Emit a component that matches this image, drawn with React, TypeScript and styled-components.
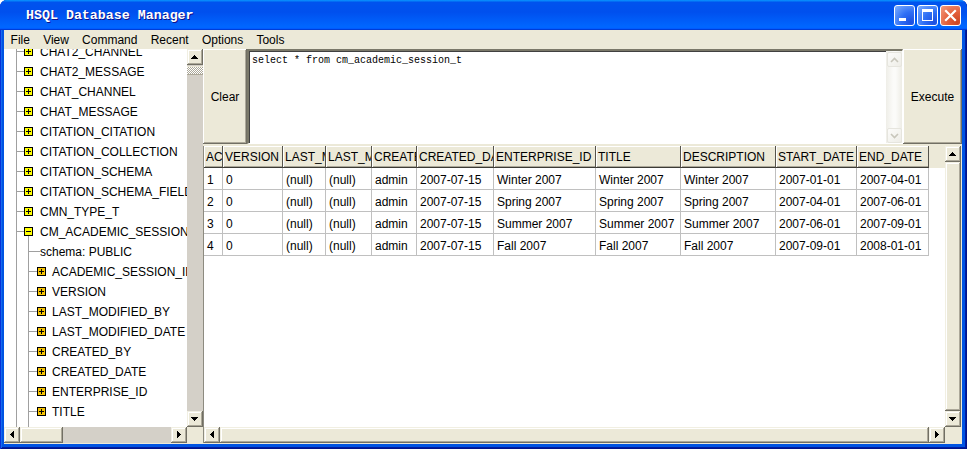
import React from "react";
import styled, { createGlobalStyle } from "styled-components";

const GlobalStyle = createGlobalStyle`
  html, body { margin: 0; padding: 0; background: #ffffff; }
  body { font-family: "Liberation Sans", Arial, sans-serif; font-size: 12px; color: #000; }
  *, *::before, *::after { box-sizing: border-box; }
`;

const raisedFace = `
  background: #ece9d8;
  box-shadow: inset -1px -1px #716f64, inset 1px 1px #f1efe2, inset -2px -2px #aca899, inset 2px 2px #ffffff;
`;

/* ---------- window frame ---------- */
const Frame = styled.div`
  width: 967px;
  height: 449px;
  display: flex;
  flex-direction: column;
  background: #0054e3;
  border-radius: 7px 7px 0 0;
  overflow: hidden;
  box-shadow: inset 1px 0 #0831d9, inset -1px -1px #00138c, inset 2px 0 #166aee, inset -2px -2px #001ea0;
`;

const TitleBar = styled.div`
  height: 30px;
  flex: none;
  display: flex;
  align-items: flex-start;
  padding: 0 6px 0 26px;
  background: linear-gradient(180deg, #0997ff 0%, #0053ee 8%, #0050ee 40%, #0066ff 88%, #0066ff 93%, #005bff 95%, #003dd7 96%, #003dd7 100%);
`;

const TitleText = styled.div`
  flex: 1;
  margin-top: 8px;
  color: #ffffff;
  font: bold 13.3px "Liberation Mono", monospace;
  line-height: 16px;
  text-shadow: 1px 1px #0f1089;
  white-space: nowrap;
`;

const CaptionButtons = styled.div`
  display: flex;
  gap: 2px;
  margin-top: 5px;
`;

const CaptionButton = styled.div<{ $close?: boolean }>`
  width: 21px;
  height: 21px;
  border: 1px solid #ffffff;
  border-radius: 3px;
  display: flex;
  align-items: center;
  justify-content: center;
  background: ${(p) =>
    p.$close
      ? "radial-gradient(circle at 85% 85%, #cc4623 0%, #e4603c 45%, #f39c7f 100%)"
      : "radial-gradient(circle at 85% 85%, #1c4fe0 0%, #2f6ff5 45%, #7fb0ff 100%)"};
`;

const Client = styled.div`
  flex: 1;
  min-height: 0;
  margin: 0 5px 5px 4px;
  background: #ece9d8;
  display: flex;
  flex-direction: column;
`;

/* ---------- menu ---------- */
const MenuBar = styled.div`
  height: 19px;
  flex: none;
  display: flex;
  align-items: center;
`;

const MenuItem = styled.div`
  padding: 1px 6.6px 0;
  font-size: 12px;
  line-height: 18px;
  color: #000;
`;

/* ---------- body ---------- */
const Body = styled.div`
  flex: 1;
  min-height: 0;
  display: flex;
`;

const LeftPane = styled.div`
  width: 199px;
  flex: none;
  display: grid;
  grid-template-columns: 183px 16px;
  grid-template-rows: 1fr 16px;
  padding-bottom: 1px;
`;

const TreeViewport = styled.div`
  background: #ffffff;
  overflow: hidden;
`;

const TreeList = styled.div`
  margin-top: -7px;
`;

const TreeRowEl = styled.div`
  height: 20px;
  display: flex;
  align-items: center;
  white-space: nowrap;
`;

const TreeLabel = styled.span`
  font-size: 12px;
  line-height: 20px;
  color: #000;
`;

/* ---------- classic scrollbars ---------- */
const VScroll = styled.div`
  display: flex;
  flex-direction: column;
  min-height: 0;
`;

const HScroll = styled.div`
  display: flex;
  min-width: 0;
`;

const ArrowBtn = styled.div`
  width: 16px;
  height: 16px;
  flex: none;
  ${raisedFace}
`;

const Track = styled.div<{ $vertical?: boolean }>`
  flex: 1;
  background: #d4d0c8;
  display: flex;
  flex-direction: ${(p) => (p.$vertical ? "column" : "row")};
`;

const Thumb = styled.div<{ $size?: number }>`
  ${raisedFace}
  flex: ${(p) => (p.$size ? `0 0 ${p.$size}px` : "1")};
`;

const GripThumb = styled.div`
  flex: 0 0 9px;
  margin-top: 1px;
  background: repeating-conic-gradient(#ffffff 0 25%, #aca899 0 50%) 0 0 / 2px 2px;
  box-shadow: inset 0 -1px #aca899, inset 0 1px #ece9d8;
`;

const Corner = styled.div`
  background: #ece9d8;
`;

/* ---------- right side ---------- */
const RightPane = styled.div`
  flex: 1;
  min-width: 0;
  display: flex;
  flex-direction: column;
  gap: 2px;
  padding-bottom: 1px;
`;

const QueryRow = styled.div`
  height: 95px;
  flex: none;
  display: flex;
`;

const ActionButton = styled.div<{ $width: number }>`
  width: ${(p) => p.$width}px;
  flex: none;
  display: flex;
  align-items: center;
  justify-content: center;
  font-size: 12px;
  color: #000;
  background: #ece9d8;
  box-shadow: inset -1px -1px #716f64, inset 1px 1px #ffffff, inset -2px -2px #aca899;
`;

const Editor = styled.div`
  flex: 1;
  min-width: 0;
  display: flex;
  background: #ffffff;
  border-style: solid;
  border-width: 2px 1px 1px 2px;
  border-color: #7a7869 #ffffff #ffffff #7a7869;
  box-shadow: inset 1px 1px #404040;
`;

const SqlText = styled.div`
  flex: 1;
  padding: 3px 3px;
  font: 10px "Liberation Mono", monospace;
  line-height: 13px;
  white-space: pre;
  color: #000;
`;

const XPScroll = styled.div`
  width: 16px;
  flex: none;
  display: flex;
  flex-direction: column;
  justify-content: space-between;
  padding: 1px 0 0 1px;
  background: linear-gradient(90deg, #efeee8 0%, #fbfbf9 45%, #fbfbf9 60%, #eeede6 100%);
`;

const XPButton = styled.div`
  width: 15px;
  height: 15px;
  border: 1px solid #e6e5de;
  border-radius: 2px;
  background: linear-gradient(135deg, #fcfcfa, #eeede7);
  display: flex;
  align-items: center;
  justify-content: center;
`;

const TablePane = styled.div`
  flex: 1;
  min-height: 0;
  display: grid;
  grid-template-columns: 1fr 16px;
  grid-template-rows: 1fr 16px;
  border-left: 1px solid #8d8b80;
  border-right: 1px solid #ece9d8;
`;

const COLS = [19, 60, 43, 46, 45, 77, 102, 85, 95, 81, 72];
const colTemplate = COLS.map((w) => `${w}px`).join(" ");

const TableViewport = styled.div`
  background: #ffffff;
  overflow: hidden;
  min-width: 0;
`;

const HeaderRow = styled.div`
  display: grid;
  grid-template-columns: ${colTemplate};
  height: 22px;
  background: #ece9d8;
`;

const HeaderCell = styled.div`
  overflow: hidden;
  white-space: nowrap;
  padding: 2px 0 0 2px;
  line-height: 18px;
  font-size: 12px;
  color: #000;
  border-right: 1px solid #55534b;
  border-bottom: 1px solid #3c3b35;
  box-shadow: inset 1px 1px #ffffff, inset 0 -1px #aca899;
`;

const DataRow = styled.div`
  display: grid;
  grid-template-columns: ${colTemplate};
  height: 22px;
`;

const DataCell = styled.div`
  overflow: hidden;
  white-space: nowrap;
  padding: 3px 0 0 3px;
  line-height: 18px;
  font-size: 12px;
  color: #000;
  border-right: 1px solid #c0c0c0;
  border-bottom: 1px solid #c0c0c0;
`;

/* ---------- drawings ---------- */
type Dir = "up" | "down" | "left" | "right";
const arrowPaths: Record<Dir, string> = {
  up: "M7 6h1v1H7z M6 7h3v1H6z M5 8h5v1H5z M4 9h7v1H4z",
  down: "M4 6h7v1H4z M5 7h5v1H5z M6 8h3v1H6z M7 9h1v1H7z",
  left: "M6 7h1v1H6z M7 6h1v3H7z M8 5h1v5H8z M9 4h1v7H9z",
  right: "M6 4h1v7H6z M7 5h1v5H7z M8 6h1v3H8z M9 7h1v1H9z",
};

function Arrow({ dir }: { dir: Dir }) {
  return (
    <ArrowBtn>
      <svg width="16" height="16" viewBox="0 0 16 16" shapeRendering="crispEdges">
        <path d={arrowPaths[dir]} fill="#000" />
      </svg>
    </ArrowBtn>
  );
}

function XPChevron({ up }: { up?: boolean }) {
  return (
    <XPButton>
      <svg width="9" height="6" viewBox="0 0 9 6">
        <polyline
          points={up ? "1,5 4.5,1.5 8,5" : "1,1 4.5,4.5 8,1"}
          fill="none"
          stroke="#c8c6bb"
          strokeWidth="1.6"
        />
      </svg>
    </XPButton>
  );
}

type NodeKind = "table" | "open" | "schema" | "column";

function Gutter({ kind }: { kind: NodeKind }) {
  const w = kind === "column" ? 48 : 36;
  const line = "#a0a0a0";
  const box = (x: number, fill: string, plus: boolean) => (
    <>
      <rect x={x + 0.5} y={5.5} width={8} height={8} fill={fill} stroke="#000" />
      <line x1={x + 2} y1={9.5} x2={x + 7} y2={9.5} stroke="#000" />
      {plus && <line x1={x + 4.5} y1={7} x2={x + 4.5} y2={12} stroke="#000" />}
    </>
  );
  return (
    <svg width={w} height={20} viewBox={`0 0 ${w} 20`} shapeRendering="crispEdges" style={{ flex: "none" }}>
      <line x1={12.5} y1={0} x2={12.5} y2={20} stroke={line} />
      {(kind === "table" || kind === "open") && (
        <>
          <line x1={12} y1={9.5} x2={20} y2={9.5} stroke={line} />
          {kind === "open" && <line x1={24.5} y1={14} x2={24.5} y2={20} stroke={line} />}
          {box(20, "#ffff00", kind === "table")}
        </>
      )}
      {kind === "schema" && (
        <>
          <line x1={24.5} y1={0} x2={24.5} y2={20} stroke={line} />
          <line x1={24} y1={9.5} x2={36} y2={9.5} stroke={line} />
        </>
      )}
      {kind === "column" && (
        <>
          <line x1={24.5} y1={0} x2={24.5} y2={20} stroke={line} />
          <line x1={24} y1={9.5} x2={33} y2={9.5} stroke={line} />
          {box(33, "#f8c400", true)}
        </>
      )}
    </svg>
  );
}

function TreeRow({ kind, label }: { kind: NodeKind; label: string }) {
  return (
    <TreeRowEl>
      <Gutter kind={kind} />
      <TreeLabel>{label}</TreeLabel>
    </TreeRowEl>
  );
}

const treeNodes: { kind: NodeKind; label: string }[] = [
  { kind: "table", label: "CHAT2_CHANNEL" },
  { kind: "table", label: "CHAT2_MESSAGE" },
  { kind: "table", label: "CHAT_CHANNEL" },
  { kind: "table", label: "CHAT_MESSAGE" },
  { kind: "table", label: "CITATION_CITATION" },
  { kind: "table", label: "CITATION_COLLECTION" },
  { kind: "table", label: "CITATION_SCHEMA" },
  { kind: "table", label: "CITATION_SCHEMA_FIELD" },
  { kind: "table", label: "CMN_TYPE_T" },
  { kind: "open", label: "CM_ACADEMIC_SESSION_T" },
  { kind: "schema", label: "schema: PUBLIC" },
  { kind: "column", label: "ACADEMIC_SESSION_ID" },
  { kind: "column", label: "VERSION" },
  { kind: "column", label: "LAST_MODIFIED_BY" },
  { kind: "column", label: "LAST_MODIFIED_DATE" },
  { kind: "column", label: "CREATED_BY" },
  { kind: "column", label: "CREATED_DATE" },
  { kind: "column", label: "ENTERPRISE_ID" },
  { kind: "column", label: "TITLE" },
  { kind: "column", label: "DESCRIPTION" },
];

const headers = [
  "ACADEMIC_SESSION_ID",
  "VERSION",
  "LAST_MODIFIED_BY",
  "LAST_MODIFIED_DATE",
  "CREATED_BY",
  "CREATED_DATE",
  "ENTERPRISE_ID",
  "TITLE",
  "DESCRIPTION",
  "START_DATE",
  "END_DATE",
];

const sessions = [
  ["1", "Winter 2007", "2007-01-01", "2007-04-01"],
  ["2", "Spring 2007", "2007-04-01", "2007-06-01"],
  ["3", "Summer 2007", "2007-06-01", "2007-09-01"],
  ["4", "Fall 2007", "2007-09-01", "2008-01-01"],
];

const rows = sessions.map(([id, name, start, end]) => [
  id, "0", "(null)", "(null)", "admin", "2007-07-15", name, name, name, start, end,
]);

const menus = ["File", "View", "Command", "Recent", "Options", "Tools"];

export default function App() {
  return (
    <>
      <GlobalStyle />
      <Frame>
        <TitleBar>
          <TitleText>HSQL Database Manager</TitleText>
          <CaptionButtons>
            <CaptionButton>
              <svg width="19" height="19" viewBox="0 0 19 19" shapeRendering="crispEdges">
                <rect x="4" y="12" width="7" height="3" fill="#fff" />
              </svg>
            </CaptionButton>
            <CaptionButton>
              <svg width="19" height="19" viewBox="0 0 19 19" shapeRendering="crispEdges">
                <rect x="4" y="3" width="11" height="3" fill="#fff" />
                <rect x="4.5" y="3.5" width="10" height="11" fill="none" stroke="#fff" />
              </svg>
            </CaptionButton>
            <CaptionButton $close>
              <svg width="19" height="19" viewBox="0 0 19 19">
                <path d="M5 5L14 14M14 5L5 14" stroke="#fff" strokeWidth="2.2" strokeLinecap="square" />
              </svg>
            </CaptionButton>
          </CaptionButtons>
        </TitleBar>
        <Client>
          <MenuBar>
            {menus.map((m) => (
              <MenuItem key={m}>{m}</MenuItem>
            ))}
          </MenuBar>
          <Body>
            <LeftPane>
              <TreeViewport>
                <TreeList>
                  {treeNodes.map((n) => (
                    <TreeRow key={n.label} kind={n.kind} label={n.label} />
                  ))}
                </TreeList>
              </TreeViewport>
              <VScroll>
                <Arrow dir="up" />
                <Track $vertical>
                  <GripThumb />
                </Track>
                <Arrow dir="down" />
              </VScroll>
              <HScroll>
                <Arrow dir="left" />
                <Track>
                  <Thumb $size={43} />
                </Track>
                <Arrow dir="right" />
              </HScroll>
              <Corner />
            </LeftPane>
            <RightPane>
              <QueryRow>
                <ActionButton $width={44}>Clear</ActionButton>
                <Editor>
                  <SqlText>select * from cm_academic_session_t</SqlText>
                  <XPScroll>
                    <XPChevron up />
                    <XPChevron />
                  </XPScroll>
                </Editor>
                <ActionButton $width={59}>Execute</ActionButton>
              </QueryRow>
              <TablePane>
                <TableViewport>
                  <HeaderRow>
                    {headers.map((h) => (
                      <HeaderCell key={h}>{h}</HeaderCell>
                    ))}
                  </HeaderRow>
                  {rows.map((r, i) => (
                    <DataRow key={i}>
                      {r.map((c, j) => (
                        <DataCell key={j}>{c}</DataCell>
                      ))}
                    </DataRow>
                  ))}
                </TableViewport>
                <VScroll>
                  <Arrow dir="up" />
                  <Thumb />
                  <Arrow dir="down" />
                </VScroll>
                <HScroll>
                  <Arrow dir="left" />
                  <Thumb />
                  <Arrow dir="right" />
                </HScroll>
                <Corner />
              </TablePane>
            </RightPane>
          </Body>
        </Client>
      </Frame>
    </>
  );
}
